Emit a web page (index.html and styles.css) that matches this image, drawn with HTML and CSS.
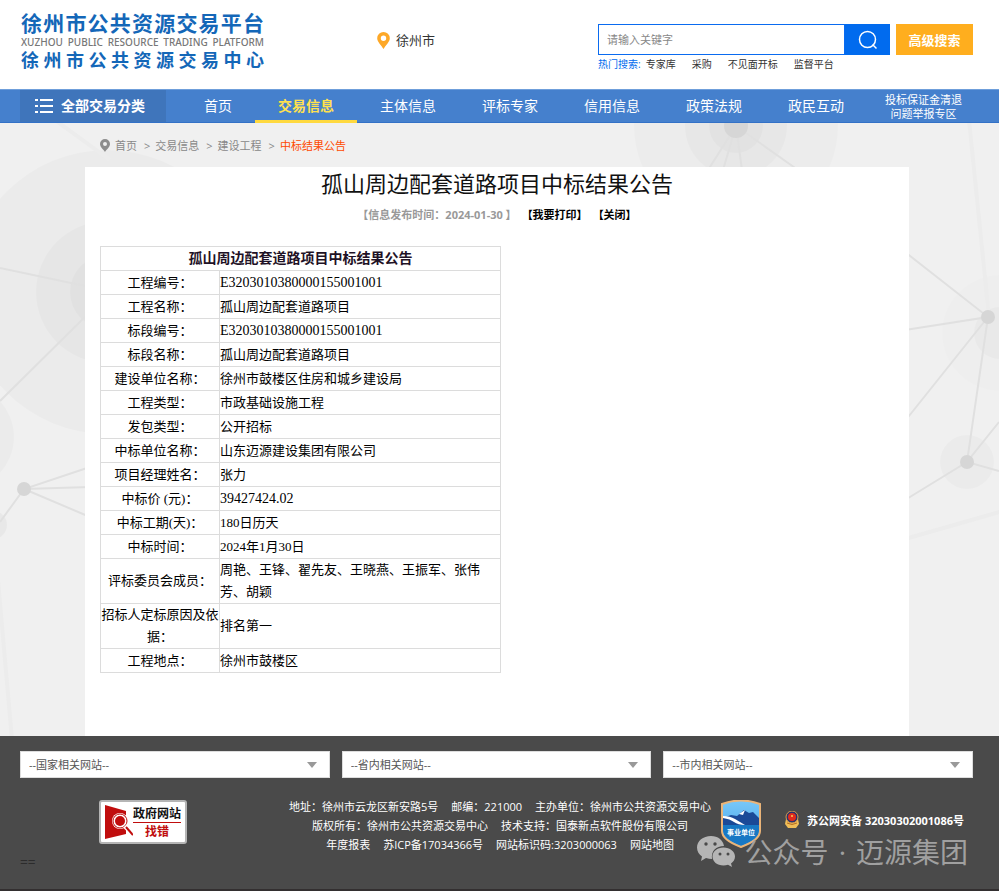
FILE: index.html
```html
<!DOCTYPE html>
<html lang="zh-CN">
<head>
  <meta charset="UTF-8">
  <meta name="viewport" content="width=device-width, initial-scale=1.0">
  <title>孤山周边配套道路项目中标结果公告</title>
  <link rel="stylesheet" href="styles.css">
</head>
<body>

  <header class="header">
    <a href="#" class="logo">
      <span class="logo-main">徐州市公共资源交易平台</span>
      <span class="logo-en">XUZHOU PUBLIC RESOURCE TRADING PLATFORM</span>
      <span class="logo-sub">徐州市公共资源交易中心</span>
    </a>

    <div class="location">
      <svg width="13" height="17" viewBox="0 0 13 17"><path fill="#fda828" fill-rule="evenodd" d="M6.500 0A6.300 6.300 0 0 0 .2 6.300C.2 10 4.500 13.500 6.500 17c2-3.500 6.300-7 6.300-10.700A6.300 6.300 0 0 0 6.500 0zm0 3.500a2.700 2.700 0 1 1 0 5.400 2.700 2.700 0 0 1 0-5.400z"/></svg>
      <span>徐州市</span>
    </div>

    <div class="search">
      <form class="search-form">
        <input type="text" placeholder="请输入关键字" aria-label="请输入关键字">
        <button type="submit" class="search-btn" aria-label="搜索">
          <svg width="20" height="20" viewBox="0 0 20 20" fill="none" stroke="#fff" stroke-width="1.500"><circle cx="9.500" cy="9.500" r="8"/><path d="M14.500 14.500l4 4"/></svg>
        </button>
        <button type="button" class="adv-btn">高级搜索</button>
      </form>
      <div class="hot">
        <span class="hot-label">热门搜索:</span>
        <a href="#">专家库</a>
        <a href="#">采购</a>
        <a href="#">不见面开标</a>
        <a href="#">监督平台</a>
      </div>
    </div>
  </header>

  <nav class="nav">
    <a href="#" class="nav-all">
      <svg width="18" height="15" viewBox="0 0 18 15" fill="#fff"><path d="M0 0h3v2H0zM5 0h13v2H5zM0 6h3v2H0zM5 6h13v2H5zM0 12h3v2H0zM5 12h13v2H5z"/></svg>
      <span>全部交易分类</span>
    </a>
    <a href="#" class="nav-item">首页</a>
    <a href="#" class="nav-item active">交易信息</a>
    <a href="#" class="nav-item">主体信息</a>
    <a href="#" class="nav-item">评标专家</a>
    <a href="#" class="nav-item">信用信息</a>
    <a href="#" class="nav-item">政策法规</a>
    <a href="#" class="nav-item">政民互动</a>
    <a href="#" class="nav-item nav-small">投标保证金清退<br>问题举报专区</a>
  </nav>

  <main class="main">
    <svg class="main-bg" viewBox="0 123 999 613" preserveAspectRatio="xMidYMin slice" aria-hidden="true">
      <g fill="#000">
        <circle cx="107" cy="292" r="142" opacity=".02"/>
        <circle cx="107" cy="292" r="71" opacity=".02"/>
        <circle cx="107" cy="292" r="37" opacity=".02"/>
        <circle cx="-39" cy="437" r="53" opacity=".02"/>
        <circle cx="-7" cy="525" r="14" opacity=".03"/>
        <circle cx="736" cy="126" r="102" opacity=".015"/>
        <circle cx="736" cy="126" r="51" opacity=".02"/>
        <circle cx="736" cy="126" r="27" opacity=".02"/>
        <circle cx="1000" cy="333" r="58" opacity=".008"/>
        <circle cx="1000" cy="333" r="26" opacity=".02"/>
        <circle cx="967" cy="462" r="27" opacity=".02"/>
      </g>
      <g fill="none" stroke="#ececec" stroke-width="4">
        <path d="M-2 580L12 740M969 120L989 317M905 539L1003 511M55 120L110 160"/>
      </g>
      <g fill="none" stroke="#e0e0e0" stroke-width="2">
        <path d="M0 268L90 287M0 401L90 312M0 522L24 489L90 467M24 489L90 487M24 489L90 517"/>
        <path d="M905 252L988 317L905 330M988 317L905 421M988 317L967 462L905 500M999 471L967 462L999 422"/>
        <path d="M736 126L708 170M736 126L723 170M736 126L742 170M736 126L798 170"/>
      </g>
      <g fill="#d6d6d6">
        <circle cx="24" cy="489" r="7"/>
        <circle cx="988" cy="317" r="7"/>
        <circle cx="967" cy="462" r="7"/>
        <circle cx="736" cy="126" r="12"/>
      </g>
    </svg>

    <div class="container">
      <div class="crumbs">
        <svg width="10" height="13" viewBox="0 0 10 13"><path fill="#8d8d8d" fill-rule="evenodd" d="M5 0a5 5 0 0 0-5 5c0 3 3.500 5.500 5 8 1.500-2.500 5-5 5-8a5 5 0 0 0-5-5zm0 3a2 2 0 1 1 0 4 2 2 0 0 1 0-4z"/></svg>
        <a href="#">首页</a>
        <span>&gt;</span>
        <a href="#">交易信息</a>
        <span>&gt;</span>
        <a href="#">建设工程</a>
        <span>&gt;</span>
        <a href="#" class="current">中标结果公告</a>
      </div>

      <article class="article">
        <h1>孤山周边配套道路项目中标结果公告</h1>
        <div class="info">
          <span>【信息发布时间：2024-01-30 】</span>
          <a href="#">【我要打印】</a>
          <a href="#">【关闭】</a>
        </div>

        <table class="result">
          <colgroup>
            <col class="col-name">
            <col>
          </colgroup>
          <thead>
            <tr><th colspan="2">孤山周边配套道路项目中标结果公告</th></tr>
          </thead>
          <tbody>
            <tr><th>工程编号：</th><td class="num">E3203010380000155001001</td></tr>
            <tr><th>工程名称：</th><td>孤山周边配套道路项目</td></tr>
            <tr><th>标段编号：</th><td class="num">E3203010380000155001001</td></tr>
            <tr><th>标段名称：</th><td>孤山周边配套道路项目</td></tr>
            <tr><th>建设单位名称：</th><td>徐州市鼓楼区住房和城乡建设局</td></tr>
            <tr><th>工程类型：</th><td>市政基础设施工程</td></tr>
            <tr><th>发包类型：</th><td>公开招标</td></tr>
            <tr><th>中标单位名称：</th><td>山东迈源建设集团有限公司</td></tr>
            <tr><th>项目经理姓名：</th><td>张力</td></tr>
            <tr><th>中标价 (元)：</th><td class="num">39427424.02</td></tr>
            <tr><th>中标工期(天)：</th><td>180日历天</td></tr>
            <tr><th>中标时间：</th><td>2024年1月30日</td></tr>
            <tr><th>评标委员会成员：</th><td>周艳、王锋、翟先友、王晓燕、王振军、张伟芳、胡颖</td></tr>
            <tr><th>招标人定标原因及依据：</th><td>排名第一</td></tr>
            <tr><th>工程地点：</th><td>徐州市鼓楼区</td></tr>
          </tbody>
        </table>
      </article>
    </div>
  </main>

  <footer class="footer">
    <div class="links">
      <div class="link-box">
        <select aria-label="国家相关网站"><option>--国家相关网站--</option></select>
      </div>
      <div class="link-box">
        <select aria-label="省内相关网站"><option>--省内相关网站--</option></select>
      </div>
      <div class="link-box">
        <select aria-label="市内相关网站"><option>--市内相关网站--</option></select>
      </div>
    </div>

    <div class="footer-row">
      <a href="#" class="find-error">
        <svg width="29" height="36" viewBox="0 0 29 36">
          <path fill="#c00d0d" d="M1 1l21 6v23L1 35z"/>
          <circle cx="16" cy="17" r="8" fill="#fff"/>
          <circle cx="16" cy="17" r="7" fill="#fff" stroke="#c00d0d" stroke-width="1"/>
          <circle cx="16" cy="17" r="5" fill="#c00d0d"/>
          <path d="M21 22l8 8" stroke="#fff" stroke-width="5"/>
          <path d="M22 23l7 8" stroke="#c00d0d" stroke-width="2"/>
        </svg>
        <span class="find-text"><b>政府网站</b><em>找错</em></span>
      </a>

      <div class="copyright">
        <p><span>地址：徐州市云龙区新安路5号</span><span>邮编：221000</span><span>主办单位：徐州市公共资源交易中心</span></p>
        <p><span>版权所有：徐州市公共资源交易中心</span><span>技术支持：国泰新点软件股份有限公司</span></p>
        <p><a href="#">年度报表</a><a href="#">苏ICP备17034366号</a><span>网站标识码:3203000063</span><a href="#">网站地图</a></p>
      </div>

      <a href="#" class="shield" aria-label="事业单位">
        <svg width="40" height="48" viewBox="0 0 40 48">
          <defs>
            <linearGradient id="sky" x1="0" y1="0" x2="0" y2="1">
              <stop offset="0" stop-color="#79c8f8"/>
              <stop offset="1" stop-color="#3f9fe6"/>
            </linearGradient>
          </defs>
          <path fill="url(#sky)" d="M1 4Q20-3 39 4v27q0 9-19 16Q1 40 1 31z"/>
          <path fill="#1b4a97" d="M2 18l8-3 6 1 7-6 5 3 4-1 6 6v8H2z"/>
          <path fill="#1878c4" d="M2 25h36v6q0 8-18 15Q2 39 2 31z"/>
          <path fill="#fff" d="M2 16q7 0 12 3t10 6q-7 0-11-3T2 18zM18 14l6-4-2 5z"/>
          <path fill="none" stroke="#eab478" stroke-width="2" d="M1 4Q20-3 39 4v27q0 9-19 16Q1 40 1 31z"/>
          <text x="20" y="35" text-anchor="middle" class="shield-text">事业单位</text>
        </svg>
      </a>

      <a href="#" class="police">
        <svg width="14" height="17" viewBox="0 0 14 17">
          <path fill="#f0bd57" d="M1 8h12l1 5-3 4H3l-3-4z"/>
          <circle cx="7" cy="6" r="6" fill="#26336e" stroke="#d99a4a"/>
          <circle cx="7" cy="6" r="4" fill="#e02b1d"/>
          <circle cx="7" cy="5" r="1" fill="#f7cf54"/>
          <path fill="none" stroke="#b56d20" d="M2 12q5 3 10 0"/>
        </svg>
        <span>苏公网安备 32030302001086号</span>
      </a>
    </div>

    <div class="mark">==</div>

    <div class="watermark">
      <svg width="38" height="32" viewBox="0 0 38 32">
        <path fill="#b5b5b5" d="M14 0C6 0 0 5 0 11.500c0 4 2 7 5 9L4 25l5-3q3 1 6 1C14 15 19 10 27 10 26 4 21 0 14 0z"/>
        <path fill="#b5b5b5" d="M26.500 11.500C20 11.500 15.500 15.500 15.500 20.500s4.500 9 11 9q2.500 0 4.500-.7l4 2.200-1-3.500c2.500-1.700 4-4 4-7 0-5-5-9-11.500-9z"/>
        <g fill="#4a4a4a"><circle cx="9" cy="8" r="1.700"/><circle cx="18" cy="8" r="1.700"/><circle cx="23" cy="18" r="1.500"/><circle cx="31" cy="18" r="1.500"/></g>
      </svg>
      <span>公众号</span><span>·</span><span>迈源集团</span>
    </div>
  </footer>

</body>
</html>
```

FILE: styles.css
```css
/* General Styles */
body {
  margin: 0;
  font-family: "Open Sans", "Noto Sans CJK SC", sans-serif;
  font-size: 11px;
  color: #333;
  background-color: #fff;
  display: flex;
  flex-direction: column;
  min-height: 100vh;
}

* {
  box-sizing: border-box;
}

a {
  color: inherit;
  text-decoration: none;
}

svg {
  display: block;
  flex-shrink: 0;
}

/* Header */
.header {
  display: flex;
  align-items: flex-start;
  height: 89px;
  padding: 0 26px 0 21px;
}

.logo {
  width: 243px;
  padding-top: 10px;
  color: #1467b8;
  font-weight: bold;
}

.logo span {
  display: block;
  white-space: nowrap;
  text-align-last: justify;
}

.logo .logo-main {
  font-size: 21px;
  line-height: 26px;
}

.logo .logo-en {
  color: #777;
  font-family: "Noto Sans", sans-serif;
  font-size: 10px;
  font-weight: 500;
  line-height: 12px;
}

.logo .logo-sub {
  font-size: 18px;
  line-height: 24px;
}

.location {
  display: flex;
  align-items: center;
  gap: 6px;
  margin: 30px 0 0 113px;
  font-size: 13px;
  line-height: 20px;
}

.search {
  width: 375px;
  margin: 24px 0 0 auto;
}

.search-form {
  display: flex;
  height: 31px;
}

.search-form input {
  flex: 1;
  min-width: 0;
  padding: 0 8px;
  border: 1px solid #0a6bf0;
  border-radius: 0;
  font-family: inherit;
  font-size: 11px;
  outline: none;
}

.search-form input::placeholder {
  color: #888;
}

.search-form button {
  border: none;
  color: #fff;
  cursor: pointer;
}

.search-btn {
  display: flex;
  align-items: center;
  justify-content: center;
  width: 45px;
  padding: 0;
  background-color: #016bee;
}

.adv-btn {
  width: 77px;
  margin-left: 6px;
  padding: 0;
  background-color: #ffae1e;
  font-family: inherit;
  font-size: 13px;
  font-weight: bold;
}

.hot {
  display: flex;
  gap: 16px;
  font-size: 10px;
  line-height: 18px;
}

.hot-label {
  margin-right: -11px;
  color: #016bee;
}

/* Navigation */
.nav {
  display: flex;
  height: 34px;
  padding-left: 20px;
  background-color: #4580cd;
  border-top: 1px solid #6f9fdb;
  border-bottom: 1px solid #3371c6;
  color: #fff;
  font-size: 14px;
  line-height: 32px;
  white-space: nowrap;
}

.nav-all {
  display: flex;
  align-items: center;
  gap: 8px;
  width: 146px;
  margin-right: 15px;
  padding-left: 15px;
  background-color: #3f75bb;
  font-weight: bold;
}

.nav-item {
  padding: 0 23px;
}

.nav-item.active {
  height: 33px;
  border-bottom: 3px solid #ffd93f;
  color: #ffe14f;
  font-weight: bold;
}

.nav-small {
  padding: 3px 18px 0;
  font-size: 11px;
  line-height: 14px;
  text-align: center;
}

/* Main Content */
.main {
  position: relative;
  display: flex;
  flex: 1;
  overflow: hidden;
  background-color: #f0f0f0;
}

.main-bg {
  position: absolute;
  top: 0;
  left: 0;
  width: 100%;
  height: 100%;
}

.container {
  position: relative;
  display: flex;
  flex: 1;
  flex-direction: column;
  margin: 0 90px 0 85px;
}

.crumbs {
  display: flex;
  align-items: center;
  gap: 7px;
  height: 44px;
  padding-left: 15px;
  color: #888;
}

.crumbs svg,
.crumbs span {
  margin-right: -2px;
}

.crumbs .current {
  color: #ff4a00;
}

.article {
  flex: 1;
  padding: 0 15px;
  background-color: #fff;
}

.article h1 {
  margin: 0;
  color: #111;
  font-size: 22px;
  font-weight: normal;
  line-height: 32px;
  text-align: center;
}

.info {
  display: flex;
  justify-content: center;
  gap: 5px;
  margin-top: 4px;
  color: #000;
  font-weight: bold;
  line-height: 24px;
}

.info span {
  color: #999;
}

.result {
  width: 401px;
  margin: 19px 0 63px;
  border-collapse: collapse;
  table-layout: fixed;
  color: #000;
  font-family: "Liberation Serif", "Noto Sans CJK SC", serif;
  font-size: 13px;
  line-height: 22px;
}

.col-name {
  width: 119px;
}

.result th,
.result td {
  height: 24px;
  padding: 0;
  border: 1px solid #dcdcdc;
}

.result tbody th {
  font-weight: normal;
  text-align: center;
}

.result thead th {
  color: #1f1226;
  font-size: 14px;
}

.result .num {
  font-size: 14px;
}

/* Footer */
.footer {
  position: relative;
  height: 155px;
  padding: 15px 26px 0 20px;
  background-color: #4a4a4a;
  border-bottom: 2px solid #332f30;
  color: #fff;
}

.links {
  display: flex;
  gap: 12px;
}

.link-box {
  position: relative;
  flex: 1;
}

.link-box::after {
  content: "";
  position: absolute;
  top: 11px;
  right: 13px;
  border: 5px solid transparent;
  border-top: 6px solid #999;
  border-bottom: none;
  pointer-events: none;
}

.links select {
  display: block;
  width: 100%;
  height: 27px;
  padding: 0 8px;
  border: 1px solid #ddd;
  border-radius: 0;
  appearance: none;
  background-color: #fff;
  color: #555;
  font-family: inherit;
  font-size: 11px;
}

.footer-row {
  display: flex;
  padding: 19px 9px 0 79px;
}

.find-error {
  display: flex;
  align-items: center;
  width: 88px;
  height: 44px;
  margin-top: 3px;
  padding-left: 3px;
  border: 2px solid #b5b5b5;
  border-radius: 3px;
  background-color: #fff;
}

.find-text {
  display: flex;
  flex-direction: column;
  color: #111;
  font-size: 12px;
  line-height: 17px;
  text-align: center;
  white-space: nowrap;
}

.find-text b {
  border-bottom: 1px solid #c00d0d;
}

.find-text em {
  color: #c00d0d;
  font-style: normal;
  font-weight: bold;
}

.copyright {
  flex: 1;
  margin-left: 92px;
  text-align: center;
}

.copyright p {
  display: flex;
  justify-content: center;
  gap: 13px;
  margin: 0;
  line-height: 19px;
  white-space: nowrap;
}

.shield {
  margin-top: 3px;
}

.shield-text {
  fill: #fff;
  font-size: 7px;
  font-weight: bold;
}

.police {
  display: flex;
  align-items: center;
  gap: 8px;
  height: 17px;
  margin: 14px 0 0 24px;
  font-weight: bold;
  white-space: nowrap;
}

.mark {
  color: #2c2c2c;
  font-family: "Liberation Mono", monospace;
  font-size: 13px;
  line-height: 18px;
}

.watermark {
  position: absolute;
  right: 31px;
  bottom: 17px;
  display: flex;
  align-items: center;
  gap: 10px;
  color: #a0a0a0;
  font-size: 28px;
  line-height: 40px;
}
```
